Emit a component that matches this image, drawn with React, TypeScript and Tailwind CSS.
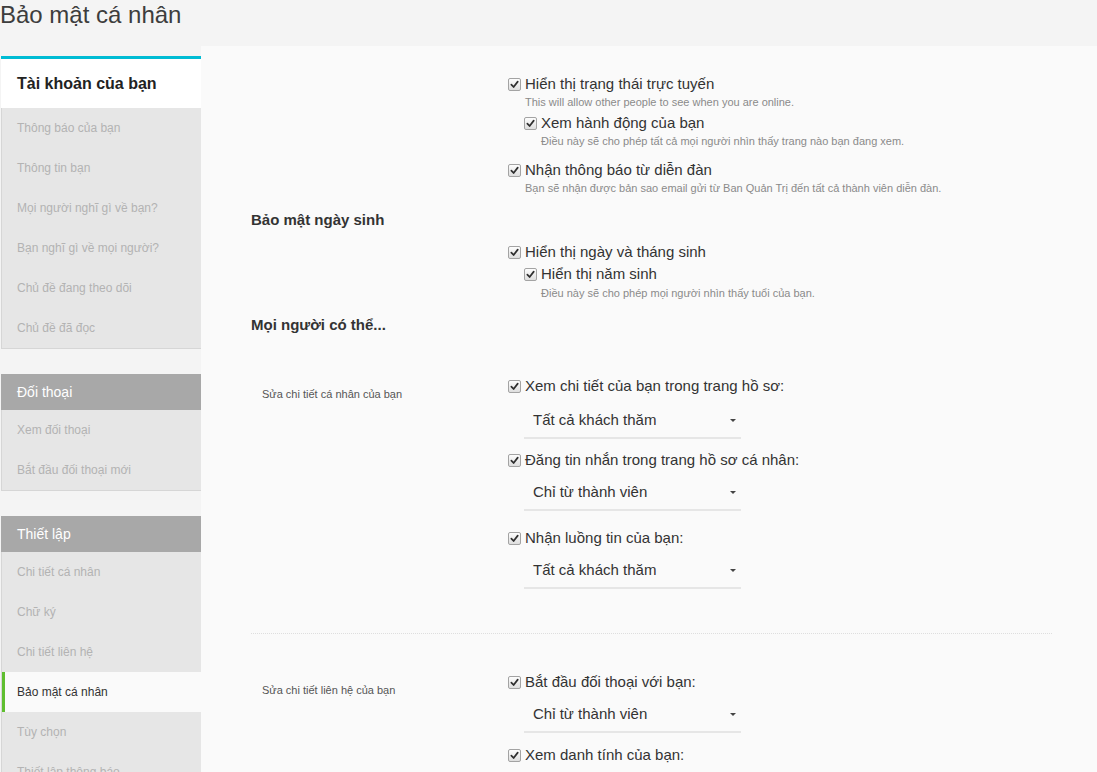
import React from 'react';

const font = { fontFamily: '"Liberation Sans", Arial, sans-serif' };

function Check() {
    return (
        <span className="inline-flex w-[13px] h-[13px] shrink-0 items-center justify-center rounded-[2px] border border-[#a3a3a3] bg-gradient-to-b from-[#fdfdfd] to-[#dedede]">
            <svg viewBox="0 0 10 10" className="w-[9px] h-[9px]">
                <path d="M1.5 5.2 L4 7.8 L8.6 1.8" fill="none" stroke="#2f2f2f" strokeWidth="1.9" strokeLinecap="round" strokeLinejoin="round" />
            </svg>
        </span>
    );
}

function CheckRow({ label, className = '' }: { label: string; className?: string }) {
    return (
        <div className={`flex items-center gap-[4px] h-[18px] ${className}`}>
            <Check />
            <span className="text-[15px] leading-[18px] text-[#333]">{label}</span>
        </div>
    );
}

function Desc({ text, className = '' }: { text: string; className?: string }) {
    return <div className={`text-[11px] leading-[14px] text-[#8a8a8a] ${className}`}>{text}</div>;
}

function Select({ value, className = '' }: { value: string; className?: string }) {
    return (
        <div className={`w-[217px] h-[36px] border-b-2 border-[#e6e6e6] flex items-center justify-between pl-[9px] pr-[5px] ${className}`}>
            <span className="text-[15px] text-[#333]">{value}</span>
            <span className="w-0 h-0 border-l-[3px] border-r-[3px] border-t-[3px] border-l-transparent border-r-transparent border-t-[#444]" />
        </div>
    );
}

function NavItem({ label, active = false }: { label: string; active?: boolean }) {
    return (
        <div
            className={`h-[40px] flex items-center text-[12px] ${
                active
                    ? 'bg-[#fafafa] text-[#333] border-l-[3px] border-[#5fbe2f] pl-[12px]'
                    : 'text-[#b3b3b3] pl-[15px]'
            }`}
        >
            {label}
        </div>
    );
}

function NavHeader({ label }: { label: string }) {
    return <div className="h-[36px] bg-[#a8a8a8] text-white text-[14px] flex items-center pl-[15px] border-l border-[#a8a8a8]">{label}</div>;
}

export default function App() {
    return (
        <div className="min-h-screen bg-[#f4f4f4] overflow-hidden" style={font}>
            {/* Page title */}
            <div className="h-[46px]">
                <h1 className="text-[24px] leading-[28px] pt-[1px] text-[#3d3d3d] font-normal">Bảo mật cá nhân</h1>
            </div>

            <div className="flex">
                {/* Sidebar */}
                <aside className="w-[201px] shrink-0 pl-[1px] pt-[10px]">
                    <div className="border-t-[3px] border-[#00bcd4]">
                        <div className="h-[49px] bg-white flex items-center pl-[16px] text-[16px] font-bold text-[#222]">
                            Tài khoản của bạn
                        </div>
                        <div className="bg-[#e6e6e6] border-l border-b border-[#d6d6d6]">
                            <NavItem label="Thông báo của bạn" />
                            <NavItem label="Thông tin bạn" />
                            <NavItem label="Mọi người nghĩ gì về bạn?" />
                            <NavItem label="Bạn nghĩ gì về mọi người?" />
                            <NavItem label="Chủ đề đang theo dõi" />
                            <NavItem label="Chủ đề đã đọc" />
                        </div>
                    </div>

                    <div className="mt-[25px]">
                        <NavHeader label="Đối thoại" />
                        <div className="bg-[#e6e6e6] border-l border-b border-[#d6d6d6]">
                            <NavItem label="Xem đối thoại" />
                            <NavItem label="Bắt đầu đối thoại mới" />
                        </div>
                    </div>

                    <div className="mt-[25px]">
                        <NavHeader label="Thiết lập" />
                        <div className="bg-[#e6e6e6] border-l border-b border-[#d6d6d6]">
                            <NavItem label="Chi tiết cá nhân" />
                            <NavItem label="Chữ ký" />
                            <NavItem label="Chi tiết liên hệ" />
                            <NavItem label="Bảo mật cá nhân" active />
                            <NavItem label="Tùy chọn" />
                            <NavItem label="Thiết lập thông báo" />
                        </div>
                    </div>
                </aside>

                {/* Main content */}
                <main className="flex-1 bg-[#fafafa] pl-[50px] pr-[45px] pt-[29px] pb-10">
                    <div className="pl-[257px]">
                        <CheckRow label="Hiển thị trạng thái trực tuyến" />
                        <Desc className="mt-[2px] pl-[17px]" text="This will allow other people to see when you are online." />
                        <CheckRow className="mt-[5px] pl-[16px]" label="Xem hành động của bạn" />
                        <Desc className="mt-[2px] pl-[33px]" text="Điều này sẽ cho phép tất cả mọi người nhìn thấy trang nào bạn đang xem." />
                        <CheckRow className="mt-[13px]" label="Nhận thông báo từ diễn đàn" />
                        <Desc className="mt-[2px] pl-[17px]" text="Bạn sẽ nhận được bản sao email gửi từ Ban Quản Trị đến tất cả thành viên diễn đàn." />
                    </div>

                    <h3 className="mt-[16px] text-[15px] leading-[18px] font-bold text-[#333]">Bảo mật ngày sinh</h3>

                    <div className="pl-[257px] mt-[14px]">
                        <CheckRow label="Hiển thị ngày và tháng sinh" />
                        <CheckRow className="mt-[4px] pl-[16px]" label="Hiển thị năm sinh" />
                        <Desc className="mt-[3px] pl-[33px]" text="Điều này sẽ cho phép mọi người nhìn thấy tuổi của bạn." />
                    </div>

                    <h3 className="mt-[16px] text-[15px] leading-[18px] font-bold text-[#333]">Mọi người có thể...</h3>

                    <div className="flex mt-[43px]">
                        <div className="w-[257px] shrink-0 pl-[11px] pt-[10px] text-[11px] leading-[14px] text-[#555]">
                            Sửa chi tiết cá nhân của bạn
                        </div>
                        <div>
                            <CheckRow label="Xem chi tiết của bạn trong trang hồ sơ:" />
                            <Select className="mt-[8px] ml-[16px]" value="Tất cả khách thăm" />
                            <CheckRow className="mt-[12px]" label="Đăng tin nhắn trong trang hồ sơ cá nhân:" />
                            <Select className="mt-[6px] ml-[16px]" value="Chỉ từ thành viên" />
                            <CheckRow className="mt-[18px]" label="Nhận luồng tin của bạn:" />
                            <Select className="mt-[6px] ml-[16px]" value="Tất cả khách thăm" />
                        </div>
                    </div>

                    <div className="mt-[44px] border-t border-dotted border-[#dedede]" />

                    <div className="flex mt-[39px]">
                        <div className="w-[257px] shrink-0 pl-[11px] pt-[10px] text-[11px] leading-[14px] text-[#555]">
                            Sửa chi tiết liên hệ của bạn
                        </div>
                        <div>
                            <CheckRow label="Bắt đầu đối thoại với bạn:" />
                            <Select className="mt-[6px] ml-[16px]" value="Chỉ từ thành viên" />
                            <CheckRow className="mt-[13px]" label="Xem danh tính của bạn:" />
                            <Select className="mt-[6px] ml-[16px]" value="Chỉ từ thành viên" />
                        </div>
                    </div>
                </main>
            </div>
        </div>
    );
}
